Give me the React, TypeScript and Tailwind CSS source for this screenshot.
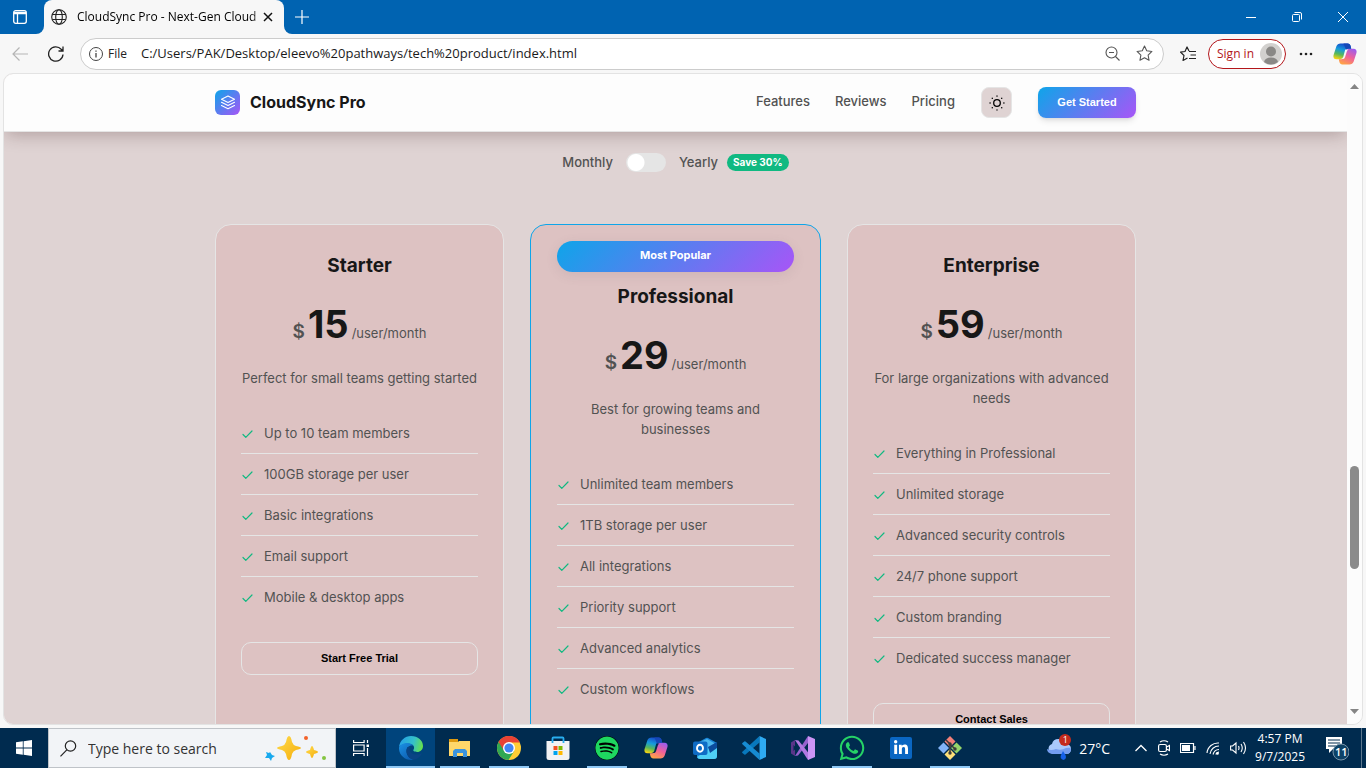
import type { ReactNode } from "react";
import { FaLinkedinIn, FaSpotify, FaWhatsapp } from "react-icons/fa";

type Plan = {
  name: string;
  price: number;
  description: string;
  features: string[];
  action: string;
  popular?: boolean;
};

const plans: Plan[] = [
  {
    name: "Starter",
    price: 15,
    description: "Perfect for small teams getting started",
    features: ["Up to 10 team members", "100GB storage per user", "Basic integrations", "Email support", "Mobile & desktop apps"],
    action: "Start Free Trial",
  },
  {
    name: "Professional",
    price: 29,
    description: "Best for growing teams and businesses",
    features: ["Unlimited team members", "1TB storage per user", "All integrations", "Priority support", "Advanced analytics", "Custom workflows"],
    action: "Start Free Trial",
    popular: true,
  },
  {
    name: "Enterprise",
    price: 59,
    description: "For large organizations with advanced needs",
    features: ["Everything in Professional", "Unlimited storage", "Advanced security controls", "24/7 phone support", "Custom branding", "Dedicated success manager"],
    action: "Contact Sales",
  },
];

function CopilotIcon({ id, gap, className }: { id: string; gap: string; className: string }) {
  return (
    <svg viewBox="0 0 24 24" className={className} aria-hidden="true">
      <defs>
        <linearGradient id={id + "a"} x1="0.6" y1="0" x2="0.3" y2="1">
          <stop offset="0" stopColor="#1746c9" />
          <stop offset="0.4" stopColor="#159bdc" />
          <stop offset="0.7" stopColor="#57b85a" />
          <stop offset="1" stopColor="#f5d313" />
        </linearGradient>
        <linearGradient id={id + "b"} x1="0.8" y1="0" x2="0.3" y2="1">
          <stop offset="0" stopColor="#9a5cf0" />
          <stop offset="0.5" stopColor="#f0609a" />
          <stop offset="1" stopColor="#ffa245" />
        </linearGradient>
      </defs>
      <path d="M7.500 1.500h7.200c1.600 0 2.400 1 2.900 2.500l.6 2.700h-2.800c-1.300 0-2 .8-2.400 2l-2 6.400c-.5 1.500-1.300 2.200-2.800 2.200H3.500C1 17.300 0 15.500.5 13.200L3.300 4.500c.7-2 2.300-3 4.200-3z" fill={`url(#${id}a)`} />
      <path d="M16.500 22.500H9.300c-1.600 0-2.400-1-2.900-2.500l-.6-2.700h2.800c1.300 0 2-.8 2.400-2l2-6.400c.5-1.500 1.300-2.200 2.800-2.200h4.700c2.500 0 3.500 1.800 3 4.100l-2.800 8.700c-.7 2-2.300 3-4.200 3z" fill={`url(#${id}b)`} />
      <path d="M10.500 1.500h4.200c1.600 0 2.400 1 2.900 2.500l.6 2.700h-2.800c-1 0-1.700.5-2.200 1.500z" fill="#1547b8" />
      <path d="M12.300 7.500h3.200q-1.200.5-1.700 2l-1.700 5.500q-.6 2-2 2H7.500q2 0 2.700-2l1.500-5.500q.4-1.500.6-2z" fill={gap} />
    </svg>
  );
}

function EdgeIcon() {
  return (
    <svg viewBox="0 0 24 24" className="size-6" aria-hidden="true">
      <defs>
        <linearGradient id="edgeTop" x1="0" y1="0.3" x2="1" y2="0.5">
          <stop offset="0" stopColor="#249fe8" />
          <stop offset="0.6" stopColor="#35c1c9" />
          <stop offset="1" stopColor="#66e04d" />
        </linearGradient>
        <linearGradient id="edgeLow" x1="0" y1="0" x2="0.7" y2="1">
          <stop offset="0" stopColor="#1b92e6" />
          <stop offset="1" stopColor="#0d5caf" />
        </linearGradient>
      </defs>
      <path d="M0 11.500C.5 4.500 6 0 12 0c7 0 12 4.500 12 10 0 3.500-2.600 6-5.800 6-2.700 0-4.600-1-3.600-2.400 1.500-2.200-.2-5.800-4.600-5.800C5 7.800 1 9 0 11.500z" fill="url(#edgeTop)" />
      <path d="M0 11.500C1 8.500 4.500 7 8.500 7c2.500 0 4.500 1 5.500 2.500-4-.5-6.500 2-6.500 5.500 0 4.500 3.500 8.300 7.500 8.700-8 1.600-15.500-4.200-15-12.200z" fill="url(#edgeLow)" />
      <path d="M8.500 11c-3 5 .5 12 6.500 12.700 3.200-.7 6.200-2.800 7.700-5.700.3-.6-.2-.9-.7-.6-5.500 3-11 0-11.500-3.800-.1-1 .2-1.800.5-2.500z" fill="#0a4384" />
    </svg>
  );
}

function FolderIcon() {
  return (
    <svg viewBox="0 0 24 24" className="size-6" aria-hidden="true">
      <path d="M1 3h9v3H1z" fill="#df9a10" />
      <path d="M1 6h9l1-1h11v15H1z" fill="#ffd76a" />
      <path d="M5 21v-6l2-2h10l2 2v6h-4v-4H9v4z" fill="#3b94dd" />
    </svg>
  );
}

function ChromeIcon() {
  return (
    <svg viewBox="0 0 24 24" className="size-6" aria-hidden="true">
      <circle cx="12" cy="12" r="12" fill="#ffcd35" />
      <path d="M12 12L1.600 6A12 12 0 0 0 11.500 24L17.200 15z" fill="#30a852" />
      <path d="M12 6.500H22.700A12 12 0 0 0 1.600 6L7.200 15z" fill="#e94235" />
      <circle cx="12" cy="12" r="6" fill="#fff" />
      <circle cx="12" cy="12" r="4.600" fill="#4285f4" />
    </svg>
  );
}

function StoreIcon() {
  return (
    <svg viewBox="0 0 24 24" className="size-6" aria-hidden="true">
      <path d="M.5 5h23v16.500q0 2.500-2.500 2.500H3Q.5 24 .5 21.500z" fill="#f1f2f4" />
      <path d="M6.500 7V2.500Q6.500 1.500 7.500 1.500h9q1 0 1 1V7" fill="none" stroke="#28aef0" strokeWidth="1.800" />
      <path d="M7.500 10h4v4h-4z" fill="#f25022" />
      <path d="M12.500 10h4v4h-4z" fill="#7fba00" />
      <path d="M7.500 15h4v4h-4z" fill="#00a4ef" />
      <path d="M12.500 15h4v4h-4z" fill="#ffb900" />
    </svg>
  );
}

function OutlookIcon() {
  return (
    <svg viewBox="0 0 24 24" className="size-6" aria-hidden="true">
      <path d="M4 7l9-5q1-.6 2 0l9 5v13q0 3-3 3H7q-3 0-3-3z" fill="#1a86d8" />
      <path d="M7 6l7-3 7 4v9H7z" fill="#4db8ee" />
      <path d="M24 7v13q0 3-3 3H7q-2 0-3-2z" fill="#4fd0f7" />
      <path d="M15 11l9-5v6l-7 5z" fill="#0b4c9d" />
      <rect y="5.500" width="14.500" height="13.500" rx="2" fill="#0f6cc5" />
      <ellipse cx="7" cy="12.200" rx="3" ry="3.500" fill="none" stroke="#fff" strokeWidth="1.900" />
    </svg>
  );
}

function CodeIcon() {
  return (
    <svg viewBox="0 0 24 24" className="size-6" aria-hidden="true">
      <path d="M17.500 0v6.500L3.500 18.500q-.6.500-1.200 0L.4 17q-.6-.6 0-1.200z" fill="#0878bd" />
      <path d="M17.500 24v-6.500L3.500 5.500q-.6-.5-1.200 0L.4 7q-.6.600 0 1.200z" fill="#168bd2" />
      <path d="M17.500 0L24 3v18l-6.500 3z" fill="#2eaaf2" />
    </svg>
  );
}

function StudioIcon() {
  return (
    <svg viewBox="0 0 24 24" className="size-6" aria-hidden="true">
      <path d="M0 6.500L4 4v16l-4-2.500z" fill="#5a3589" />
      <path d="M2.500 9L5.500 12l-3 3z" fill="#002b4f" />
      <path d="M4 20L17 0v7L7 19.500z" fill="#9862cf" />
      <path d="M4 4l3.500.5L20 20l-3 4z" fill="#b178e0" />
      <path d="M17 0l7 3v18l-7 3z" fill="#cc94f5" />
    </svg>
  );
}

function GitIcon() {
  return (
    <svg viewBox="0 0 24 24" className="size-6" aria-hidden="true">
      <path d="M12 0l5.500 5.500L12 11 6.500 5.500z" fill="#f28079" />
      <path d="M5.500 6.500L11 12l-5.500 5.500L0 12z" fill="#82b3f7" />
      <path d="M18.500 6.500L24 12l-5.500 5.500L13 12z" fill="#95d56a" />
      <path d="M12 13l5.500 5.500L12 24l-5.500-5.500z" fill="#ffe079" />
      <path d="M8 4l4 4v9m0-9l5 5" fill="none" stroke="#3d3c3c" strokeWidth="1.500" />
      <circle cx="12" cy="8" r="1.700" fill="#3d3c3c" />
      <circle cx="12" cy="17" r="1.700" fill="#3d3c3c" />
      <circle cx="17" cy="13" r="1.700" fill="#3d3c3c" />
    </svg>
  );
}

const apps: { label: string; icon: ReactNode; open?: boolean; active?: boolean }[] = [
  { label: "Edge", icon: <EdgeIcon />, active: true },
  { label: "File Explorer", icon: <FolderIcon />, open: true },
  { label: "Chrome", icon: <ChromeIcon />, open: true },
  { label: "Store", icon: <StoreIcon /> },
  { label: "Spotify", icon: <FaSpotify className="size-6 rounded-full bg-black text-[#1ed760]" />, open: true },
  { label: "Copilot", icon: <CopilotIcon id="taskbar" gap="#002b4f" className="size-6" /> },
  { label: "Outlook", icon: <OutlookIcon /> },
  { label: "Code", icon: <CodeIcon /> },
  { label: "Visual Studio", icon: <StudioIcon /> },
  { label: "WhatsApp", icon: <FaWhatsapp className="size-7 text-[#25d366]" />, open: true },
  { label: "LinkedIn", icon: <span className="flex size-[22px] items-center justify-center rounded-xs bg-[#0a66c2]"><FaLinkedinIn className="size-4 text-white" /></span> },
  { label: "Git", icon: <GitIcon />, open: true },
];

function TitleBar() {
  return (
    <div className="flex h-[34px] shrink-0 items-stretch bg-[#0063b1] text-white">
      <div className="flex bg-[linear-gradient(to_top,#f7f7f7_10px,#0063b1_10px)]">
        <button aria-label="Tab actions" className="flex w-11 items-center justify-center rounded-br-lg bg-[#0063b1]">
          <svg viewBox="0 0 14 14" className="mr-1 size-3.5" fill="none" stroke="currentColor" strokeWidth="1.300" aria-hidden="true">
            <rect x=".7" y=".7" width="12.600" height="12.600" rx="2" />
            <path d="M1 2.500h12M1 3.500h12M4.500 3v10" />
          </svg>
        </button>
      </div>
      <div className="flex w-60 shrink-0 items-center rounded-t-lg bg-[#f7f7f7] pl-[7px] pr-2.5 text-black">
        <svg viewBox="0 0 16 16" className="size-4 shrink-0" fill="none" stroke="#222" strokeWidth="1.100" aria-hidden="true">
          <circle cx="8" cy="8" r="7.300" />
          <ellipse cx="8" cy="8" rx="3.300" ry="7.300" />
          <path d="M1.300 5.500h13.400M1.300 10.500h13.400" />
        </svg>
        <span className="ml-2.5 min-w-0 flex-1 whitespace-nowrap bg-linear-to-r from-black from-93% to-[#aaa] bg-clip-text font-['Open_Sans',sans-serif] text-[12px] text-transparent">
          CloudSync Pro - Next-Gen Cloud
        </span>
        <button aria-label="Close tab" className="flex size-3 items-center justify-center">
          <svg viewBox="0 0 10 10" className="size-2.5" stroke="#111" strokeWidth="1.500" aria-hidden="true"><path d="M1 1l8 8M9 1L1 9" /></svg>
        </button>
      </div>
      <div className="flex bg-[linear-gradient(to_top,#f7f7f7_10px,#0063b1_10px)]">
        <button aria-label="New tab" className="flex w-9 items-center justify-center rounded-bl-lg bg-[#0063b1]">
          <svg viewBox="0 0 14 14" className="size-3.5" stroke="currentColor" strokeWidth="1.200" aria-hidden="true"><path d="M7 0v14M0 7h14" /></svg>
        </button>
      </div>
      <div className="ml-auto flex">
        <button aria-label="Minimize" className="flex w-[46px] items-center justify-center">
          <svg viewBox="0 0 10 10" className="size-2.5" stroke="currentColor" aria-hidden="true"><path d="M0 5.500h10" /></svg>
        </button>
        <button aria-label="Restore" className="flex w-[46px] items-center justify-center">
          <svg viewBox="0 0 10 10" className="size-2.5" fill="none" stroke="currentColor" aria-hidden="true"><rect x=".5" y="2.500" width="7" height="7" rx="1" /><path d="M2.500 .5H8q1.500 0 1.500 1.500v5.500" /></svg>
        </button>
        <button aria-label="Close" className="flex w-[46px] items-center justify-center">
          <svg viewBox="0 0 10 10" className="size-2.5" stroke="currentColor" aria-hidden="true"><path d="M0 0l10 10M10 0L0 10" /></svg>
        </button>
      </div>
    </div>
  );
}

function AddressBar() {
  return (
    <div className="flex h-[39px] shrink-0 items-center pl-3 pr-[9px] font-['Open_Sans',sans-serif] text-[#222]">
      <button aria-label="Back" className="text-[#b5b5b5]">
        <svg viewBox="0 0 16 14" className="h-3.5 w-4" fill="none" stroke="currentColor" strokeWidth="1.200" aria-hidden="true"><path d="M7.500 .5L1 7l6.500 6.500M1 7h15" /></svg>
      </button>
      <button aria-label="Refresh" className="ml-5">
        <svg viewBox="0 0 16 16" className="size-4" fill="none" stroke="currentColor" strokeWidth="1.300" aria-hidden="true"><path d="M15 8.500a7.200 7.200 0 1 1-1.800-5.300L15 5M15 .5V5h-4.500" /></svg>
      </button>
      <div className="ml-4 flex h-8 flex-1 items-center rounded-full border border-[#ccc] bg-white pl-2 pr-2.5">
        <svg viewBox="0 0 14 14" className="size-3.5" fill="none" stroke="#444" aria-hidden="true"><circle cx="7" cy="7" r="6.500" /><path d="M7 6v4.500M7 3.500v1.300" strokeWidth="1.300" /></svg>
        <span className="ml-[5px] text-[12px]">File</span>
        <input
          aria-label="Address"
          defaultValue="C:/Users/PAK/Desktop/eleevo%20pathways/tech%20product/index.html"
          className="ml-3.5 min-w-0 flex-1 bg-transparent text-[13px] text-[#1a1a1a] outline-none"
        />
        <button aria-label="Zoom out">
          <svg viewBox="0 0 15 15" className="size-[15px]" fill="none" stroke="#555" strokeWidth="1.100" aria-hidden="true"><circle cx="6.500" cy="6.500" r="5.500" /><path d="M4 6.500h5M10.500 10.500l4 4" /></svg>
        </button>
        <button aria-label="Add to favorites" className="ml-4">
          <svg viewBox="0 0 16 16" className="size-[17px]" fill="none" stroke="#555" aria-hidden="true">
            <path d="M8 1l2.100 4.500 4.900.6-3.600 3.400.9 4.900L8 12l-4.300 2.400.9-4.900L1 6.100l4.900-.6z" strokeLinejoin="round" />
          </svg>
        </button>
      </div>
      <button aria-label="Favorites" className="ml-4">
        <svg viewBox="0 0 16 16" className="size-4" fill="none" stroke="#222" strokeWidth="1.200" aria-hidden="true">
          <path d="M9 5L7 1 5 5.500l-4.500.6L4 9.500l-1 5L7.500 12M9 5.500h7M10.500 9H16M9 12.500h7" strokeLinejoin="round" />
        </svg>
      </button>
      <button className="ml-3 flex h-[30px] items-center rounded-full border border-[#b3161b] bg-white pl-2 pr-[3px] text-[12px] text-[#b3161b]">
        Sign in
        <svg viewBox="0 0 22 22" className="ml-1.5 size-[22px]" aria-hidden="true">
          <circle cx="11" cy="11" r="11" fill="#d2d0ce" />
          <circle cx="11" cy="8.500" r="5" fill="#8a8886" />
          <path d="M4 19q1-4.500 7-4.500t7 4.500q-7 5-14 0z" fill="#8a8886" />
        </svg>
      </button>
      <button aria-label="Settings and more" className="ml-[13px]">
        <svg viewBox="0 0 14 4" className="h-1 w-3.5" fill="#222" aria-hidden="true"><circle cx="2" cy="2" r="1.300" /><circle cx="7" cy="2" r="1.300" /><circle cx="12" cy="2" r="1.300" /></svg>
      </button>
      <button aria-label="Copilot" className="ml-5">
        <CopilotIcon id="toolbar" gap="#f7f7f7" className="size-6" />
      </button>
    </div>
  );
}

function SiteHeader() {
  return (
    <header className="relative z-10 border-b border-[#e5e5e5] bg-[#fdfdfd] shadow-[0_5px_16px_-2px_rgba(60,30,30,0.28)]">
      <div className="mx-auto flex h-[57px] max-w-[921px] items-center text-[13px] font-medium text-[#525252]">
        <a href="#home" className="flex items-center gap-2.5 text-[16px] font-bold text-[#171717]">
          <span className="flex size-[25px] items-center justify-center rounded-md bg-[linear-gradient(135deg,#0ea5e9,#a855f7)]">
            <svg viewBox="0 0 16 16" className="size-4" fill="none" stroke="#fff" strokeWidth="1.100" strokeLinejoin="round" strokeLinecap="round" aria-hidden="true">
              <path d="M8 1l6.500 3.200L8 7.400 1.500 4.200zM1.500 7.300L8 10.500l6.500-3.200M1.500 10.600L8 13.800l6.500-3.200" />
            </svg>
          </span>
          <span className="pb-0.5">CloudSync Pro</span>
        </a>
        <nav className="ml-auto flex items-center gap-[26px]">
          <span className="flex gap-[25px] pb-0.5">
            <a href="#features">Features</a>
            <a href="#reviews">Reviews</a>
            <a href="#pricing">Pricing</a>
          </span>
          <button aria-label="Toggle theme" className="flex size-[31px] items-center justify-center rounded-lg border border-[#e5e5e5] bg-[#dfd3d3]">
            <svg viewBox="0 0 16 16" className="size-4" fill="none" stroke="#000" strokeWidth="1.300" strokeLinecap="round" aria-hidden="true">
              <circle cx="8" cy="8" r="3.300" />
              <path d="M8 1v.2M8 14.800v.2M1 8h.2M14.800 8h.2M3.200 3.200l.2.200M12.600 12.600l.2.200M3.200 12.800l.2-.2M12.600 3.400l.2-.2" />
            </svg>
          </button>
          <button className="h-[31px] w-[98px] rounded-lg bg-[linear-gradient(135deg,#0ea5e9,#a855f7)] font-['Liberation_Sans',sans-serif] text-[11px] font-bold text-white shadow-md">
            Get Started
          </button>
        </nav>
      </div>
    </header>
  );
}

function PlanCard({ plan }: { plan: Plan }) {
  return (
    <article
      className={
        plan.popular
          ? "-mx-px rounded-2xl border border-[#0ea5e9] bg-[#ddc2c2] px-[26px] pb-6 pt-4 text-center"
          : "rounded-2xl border border-[#e5e5e5] bg-[#ddc2c2] px-[25px] pb-6 pt-[26px] text-center"
      }
    >
      {plan.popular && (
        <div className="mb-2.5 h-[31px] rounded-full bg-[linear-gradient(135deg,#0ea5e9,#a855f7)] text-[11px] font-bold leading-7 text-white shadow-[0_3px_12px_rgba(120,100,110,0.14)]">
          Most Popular
        </div>
      )}
      <h3 className="text-[19px] font-bold leading-[30px] text-[#171717]">{plan.name}</h3>
      <p className="mt-[11px] flex items-baseline justify-center gap-[3px] leading-[64px] text-[#525252]">
        <span className="text-[19px] font-semibold">$</span>
        <span className="text-[38px] font-bold text-[#171717]">{plan.price}</span>
        <span className="text-[13px]">/user/month</span>
      </p>
      <p className="mt-[3px] text-[13px] leading-5 text-[#525252]">{plan.description}</p>
      <ul className="mt-[25px] text-left text-[13px] leading-5 text-[#525252]">
        {plan.features.map((feature) => (
          <li key={feature} className="flex items-center gap-2.5 border-b border-[#e5e5e5] py-2.5 last:border-b-0">
            <svg viewBox="0 0 13 13" className="size-[13px] shrink-0" fill="none" stroke="#10b981" strokeWidth="1.200" strokeLinecap="round" strokeLinejoin="round" aria-hidden="true">
              <path d="M2 7.500l2.800 2.800L11 4" />
            </svg>
            {feature}
          </li>
        ))}
      </ul>
      <button className="mt-[25px] h-[33px] w-full rounded-[10px] border border-[#e5e5e5] font-['Liberation_Sans',sans-serif] text-[11px] font-bold text-black">
        {plan.action}
      </button>
    </article>
  );
}

function Page() {
  return (
    <div className="flex min-h-0 flex-1 flex-col overflow-hidden bg-[#dfd3d3] font-['Inter',sans-serif]">
      <SiteHeader />
      <main className="mx-auto min-h-0 w-full max-w-[921px] flex-1">
        <div className="flex items-center justify-center pt-5 text-[13px] font-medium leading-5 text-[#525252]">
          <label htmlFor="billing">Monthly</label>
          <span className="mx-[13px] flex">
            <input
              id="billing"
              type="checkbox"
              aria-label="Yearly billing"
              className="h-[19px] w-10 appearance-none rounded-full bg-[#e5e5e5] bg-[radial-gradient(circle_at_10px_50%,#fff_8px,transparent_9px)] checked:bg-[#0ea5e9]"
            />
          </span>
          <span>Yearly</span>
          <span className="ml-[9px] rounded-full bg-[#10b981] px-1.5 text-[10px] font-bold leading-[17px] text-white">Save 30%</span>
        </div>
        <section aria-label="Plans" className="grid grid-cols-3 gap-[27px] pt-[52px]">
          {plans.map((plan) => (
            <PlanCard key={plan.name} plan={plan} />
          ))}
        </section>
      </main>
    </div>
  );
}

function Scrollbar() {
  return (
    <div className="flex w-[15px] shrink-0 flex-col items-center bg-[#fcfcfc] pb-2.5 pt-2.5" aria-hidden="true">
      <svg viewBox="0 0 9 5" className="h-[5px] w-[9px]" fill="#858585"><path d="M0 5l4.500-5L9 5z" /></svg>
      <div className="flex-[377]" />
      <div className="w-[9px] flex-[103] rounded-full bg-[#8b8b8b]" />
      <div className="flex-[140]" />
      <svg viewBox="0 0 9 5" className="h-[5px] w-[9px]" fill="#858585"><path d="M0 0l4.500 5L9 0z" /></svg>
    </div>
  );
}

function Taskbar() {
  return (
    <footer className="flex h-10 shrink-0 items-stretch bg-[#002b4f] font-['Open_Sans',sans-serif] text-white">
      <button aria-label="Start" className="flex w-12 shrink-0 items-center justify-center">
        <svg viewBox="0 0 16 16" className="size-4" fill="#fff" aria-hidden="true"><path d="M0 2.300L6.800 1.300v6.300H0zM7.600 1.200L16 0v7.600H7.600zM0 8.400h6.800v6.300L0 13.700zM7.600 8.400H16V16l-8.400-1.200z" /></svg>
      </button>
      <div className="flex w-72 shrink-0 items-center border border-[#bfc3c8] bg-[#f2f4f7] pl-[11px] pr-2">
        <svg viewBox="0 0 17 17" className="size-[17px] shrink-0" fill="none" stroke="#222" strokeWidth="1.200" aria-hidden="true"><circle cx="10.500" cy="6" r="5.200" /><path d="M6.800 9.800L.5 16.300" /></svg>
        <input aria-label="Search" placeholder="Type here to search" className="ml-[11px] min-w-0 flex-1 bg-transparent text-[14px] outline-none placeholder:text-[#333]" />
        <svg viewBox="0 0 62 26" className="h-[26px] w-[62px] shrink-0" aria-hidden="true">
          <defs>
            <linearGradient id="sparkle" x1="0" y1="0" x2="1" y2="1"><stop offset="0" stopColor="#ffdb4d" /><stop offset="1" stopColor="#f5ad0a" /></linearGradient>
          </defs>
          <path d="M24 1q2 0 3 6 1 3 4 4 5 1 5 2t-5 2q-3 1-4 4-1 6-3 6t-3-6q-1-3-4-4-5-1-5-2t5-2q3-1 4-4 1-6 3-6z" fill="url(#sparkle)" />
          <path d="M47 11q1 0 2 4 4 1 4 2t-4 2q-1 4-2 4t-2-4q-4-1-4-2t4-2q1-4 2-4z" fill="url(#sparkle)" />
          <path d="M5 17l2 3 3 1-3 2-1 3-2-3-4 0 2-3-1-3 3 1z" fill="#18a9ee" />
          <circle cx="41" cy="3" r="2" fill="#f3622b" />
          <circle cx="59" cy="23" r="2" fill="#85c441" />
        </svg>
      </div>
      <button aria-label="Task view" className="flex w-[50px] shrink-0 items-center justify-center">
        <svg viewBox="0 0 16 16" className="size-4" fill="none" stroke="#fff" strokeWidth="1.200" aria-hidden="true"><path d="M.6 0v2.500h10.500V0M.6 5h10.500v6H.6zM.6 16v-2.500h10.500V16M14.500 0v3M14.500 8v8" /><path d="M13.500 4.500h2.500v2.500h-2.500z" fill="#fff" stroke="none" /></svg>
      </button>
      <div className="flex">
        {apps.map((app) => (
          <button
            key={app.label}
            aria-label={app.label}
            className={app.active ? "flex w-[49px] flex-col items-center bg-[#00447c]" : "flex w-[49px] flex-col items-center"}
          >
            <span className="flex flex-1 items-center justify-center pt-0.5">{app.icon}</span>
            <span className={app.active ? "h-0.5 w-full bg-[#8fc8f5]" : app.open ? "h-0.5 w-10 bg-[#8fc8f5]" : "h-0.5 w-10"} />
          </button>
        ))}
      </div>
      <div className="ml-auto flex items-center">
        <button className="flex items-center gap-2 text-[14px]">
          <span className="relative block">
            <svg viewBox="0 0 24 24" className="size-6" aria-hidden="true">
              <path d="M5 17.500a5 5 0 0 1 0-9.500q1-5 6.500-5T18 8q6 0 6 5t-5 5z" fill="#a9c9fb" />
              <path d="M5 18q-5-1-5-5 4 2 9 0 5 2 10-1 5-1 5 1 0 5-5 5z" fill="#739cf0" />
              <path d="M16 15l2.500 4q1.500 4-2 5-4-1-2.500-5z" fill="#1560e8" />
            </svg>
            <span className="absolute -top-0.5 left-3 flex size-3 items-center justify-center rounded-full bg-[#c42b1c] text-[9px]">1</span>
          </span>
          27°C
        </button>
        <div className="ml-6 flex items-center gap-2.5">
          <svg viewBox="0 0 14 14" className="size-3.5" fill="none" stroke="#fff" strokeWidth="1.300" aria-hidden="true"><path d="M1.500 10L7 4.500l5.500 5.500" /></svg>
          <svg viewBox="0 0 12 16" className="h-4 w-3" fill="none" stroke="#fff" strokeWidth="1.200" aria-hidden="true"><rect x=".6" y="4.500" width="7.800" height="7" rx="1.500" /><path d="M8.500 7l3-1.500v5L8.500 9M2 2q4-2.500 8 0M2 14q4 2.500 8 0" /></svg>
          <svg viewBox="0 0 16 10" className="h-2.5 w-4" fill="none" stroke="#fff" aria-hidden="true"><path d="M.5 .5h13v9H.5zM15 3v4" strokeWidth="1.200" /><path d="M2 2h8v6H2z" fill="#fff" stroke="none" /></svg>
          <svg viewBox="0 0 14 14" className="size-3.5" fill="none" stroke="#fff" strokeWidth="1.100" aria-hidden="true"><path d="M1 12A11 11 0 0 1 13 2M4 13A9 9 0 0 1 13 5M7 13.500A6.500 6.500 0 0 1 13 8.500M10 13.500q0-2 3-2.500" /><circle cx="11.500" cy="12.500" r="1.300" fill="#fff" stroke="none" /></svg>
          <svg viewBox="0 0 17 14" className="h-3.5 w-[17px]" fill="none" stroke="#fff" aria-hidden="true"><path d="M.6 5h2L6 2v10L2.600 9h-2zM8.500 5q1 2 0 4M11 3q2.500 4 0 8M13.500 1q4 6 0 12" strokeWidth="1.100" /></svg>
        </div>
        <time className="ml-2 text-center text-[12px] leading-[18px]">
          4:57 PM
          <br />
          9/7/2025
        </time>
        <button aria-label="Notifications" className="relative ml-5 mr-3">
          <svg viewBox="0 0 24 26" className="h-[26px] w-6" aria-hidden="true">
            <path d="M1 2h16v12H8l-4 4v-4H1z" fill="#fff" />
            <path d="M3 5h12M3 8h12M3 11h8" stroke="#002b4f" />
            <circle cx="16" cy="17" r="8" fill="#0d4267" stroke="#7894a9" />
          </svg>
          <span className="absolute left-2.5 top-2.5 text-[11px] font-semibold leading-[14px]">11</span>
        </button>
        <span className="mr-1 h-full border-l border-[#5d788e]" />
      </div>
    </footer>
  );
}

export default function App() {
  return (
    <div className="flex h-screen flex-col overflow-hidden bg-[#f7f7f7]">
      <TitleBar />
      <AddressBar />
      <div className="mx-[3px] mb-[3px] flex min-h-0 flex-1 overflow-hidden rounded-[10px] border border-[#e3e3e3]">
        <Page />
        <Scrollbar />
      </div>
      <Taskbar />
    </div>
  );
}
